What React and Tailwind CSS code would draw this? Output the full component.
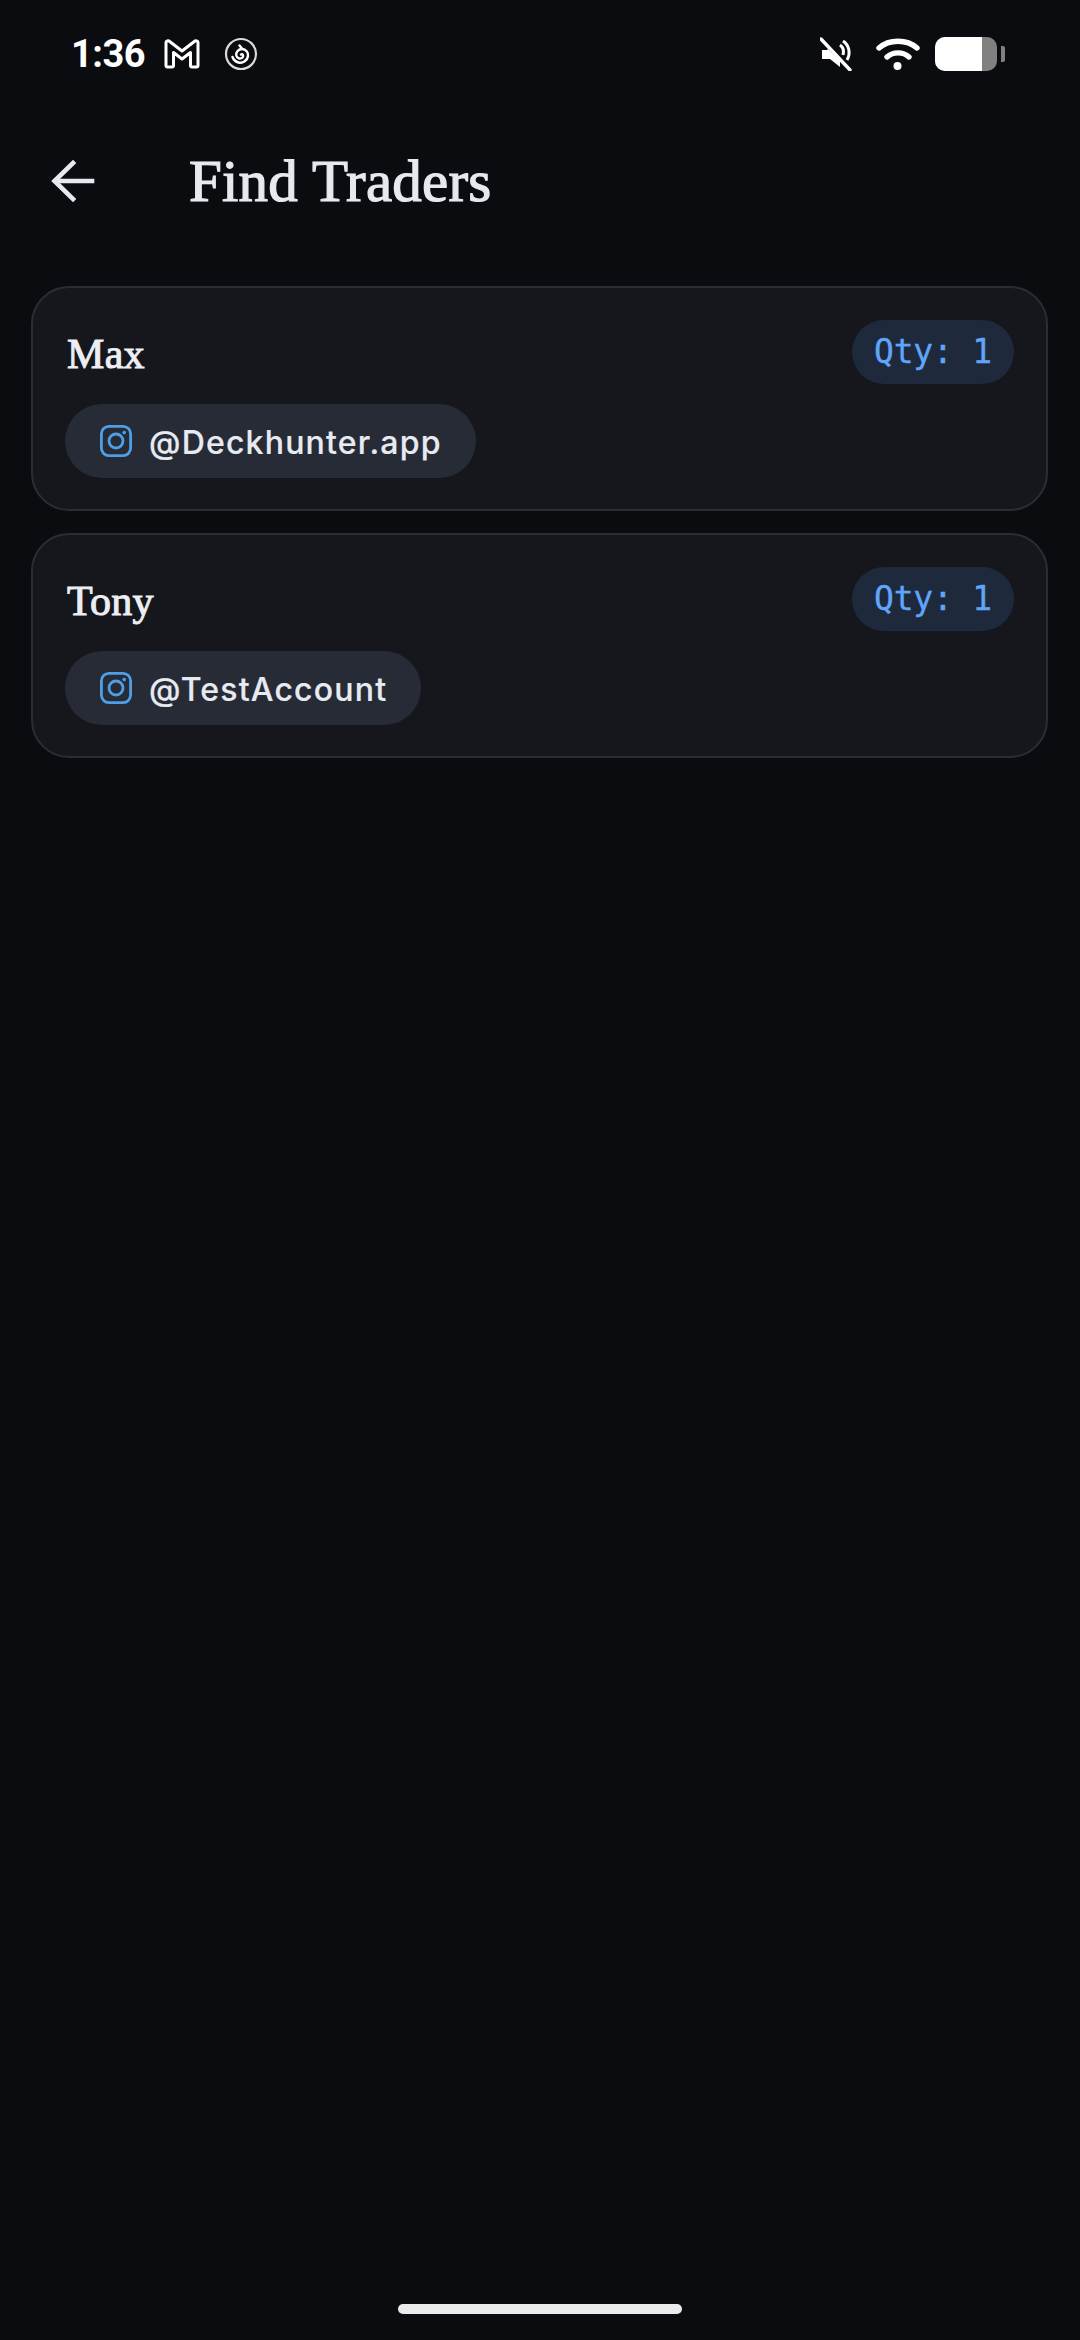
import React from "react";

const sans = "font-['Inter','Noto_Sans',sans-serif]";

function GmailIcon() {
  return (
    <svg width="36" height="30" viewBox="0 0 36 30" fill="none" stroke="#fff" strokeWidth="3" strokeLinejoin="round">
      <path d="M2 3.5 C2 2 3.5 1.5 5 2 L18 12 L31 2 C32.5 1.5 34 2 34 3.5 V26.5 C34 27.5 33.5 28 32.5 28 H28 C27 28 26.5 27.5 26.5 26.5 V13.5 L18 20 L9.5 13.5 V26.5 C9.5 27.5 9 28 8 28 H3.5 C2.5 28 2 27.5 2 26.5 Z" />
    </svg>
  );
}

function SpiralIcon() {
  return (
    <svg width="34" height="34" viewBox="0 0 34 34" fill="none" stroke="#fff" strokeLinecap="round">
      <circle cx="17" cy="17" r="15" strokeWidth="2.2" opacity="0.85" />
      <path d="M17 17.5 C18.5 16.5 20 18.5 18.5 20.5 C16.5 22.5 13 21.5 12.3 18.5 C11.6 15 14.5 12 18 12 C22 12 24.5 15.5 24 19 C23.4 23.5 19 26.5 14.5 25.5 C11.5 24.8 9.5 22.8 8.5 20" strokeWidth="2.4" />
      <path d="M15.5 8.5 L18 11.5" strokeWidth="2.4" />
    </svg>
  );
}

function MuteIcon() {
  return (
    <svg width="32" height="34" viewBox="0 0 32 34" fill="#fff">
      <path d="M2 13 H7 L8 12 L20 24 V30 L10 22 H2 Z" />
      <path d="M20 8 C23 10 24 14 23 18" stroke="#fff" strokeWidth="3" fill="none" />
      <path d="M23 4 C29 8 31 16 27 23" stroke="#fff" strokeWidth="3" fill="none" />
      <path d="M1 2 L30 33" stroke="#fff" strokeWidth="3.4" strokeLinecap="round" />
    </svg>
  );
}

function WifiIcon() {
  return (
    <svg width="44" height="34" viewBox="0 0 44 34" fill="none" stroke="#fff" strokeWidth="5.4" strokeLinecap="round">
      <path d="M3 11 C13 2 31 2 41 11" />
      <path d="M11 20 C17 14.5 27 14.5 33 20" />
      <circle cx="21.5" cy="29" r="4" fill="#fff" stroke="none" />
    </svg>
  );
}

function Battery() {
  return (
    <div className="flex items-center gap-[4px]">
      <div className="flex h-[34px] w-[62px] overflow-hidden rounded-[10px] bg-[#808080]">
        <div className="h-full w-[47px] bg-white" />
      </div>
      <div className="h-[16px] w-[4px] rounded-r-[2px] bg-[#808080]" />
    </div>
  );
}

function BackArrow() {
  return (
    <svg width="44" height="44" viewBox="0 0 44 44" fill="none" stroke="#e8e9ee" strokeWidth="4.6" strokeLinecap="square" strokeLinejoin="miter">
      <path d="M41 22 H5" />
      <path d="M22 4 L3.5 22 L22 40" />
    </svg>
  );
}

function InstagramIcon() {
  return (
    <svg width="32" height="32" viewBox="0 0 32 32" fill="none" stroke="#4f9fe6" strokeWidth="2.8">
      <rect x="1.4" y="1.4" width="29.2" height="29.2" rx="7.5" />
      <circle cx="16" cy="16" r="7" />
      <circle cx="24.2" cy="7.6" r="1.8" fill="#4f9fe6" stroke="none" />
    </svg>
  );
}

function TraderCard({ name, handle }) {
  return (
    <div className="flex h-[225px] flex-col rounded-[38px] border-2 border-[#2a2d36] bg-[#15171d] pl-[32px] pr-[32px] pt-[32px]">
      <div className="flex h-[64px] items-center justify-between">
        <span className="pl-[2px] pt-[3px] font-['Liberation_Serif',serif] text-[42px] font-normal leading-none tracking-[0.3px] text-[#eceef3] [-webkit-text-stroke:1px_#eceef3]">{name}</span>
        <span className="flex h-[64px] items-center rounded-full bg-[#1e2a3c] px-[22px] pb-[2px] font-['DejaVu_Sans_Mono',monospace] text-[33px] leading-none tracking-[-0.2px] text-[#60a5fa] [-webkit-text-stroke:0.3px_#60a5fa]">Qty: 1</span>
      </div>
      <div className="mt-[20px] flex">
        <div className="flex h-[74px] items-center gap-[17px] rounded-full bg-[#262b35] pl-[35px] pr-[34px]">
          <InstagramIcon />
          <span className={`${sans} pt-[4px] text-[32px] font-medium leading-none tracking-[1.2px] text-[#e8eaf2] [-webkit-text-stroke:0.2px_#e8eaf2]`}>{handle}</span>
        </div>
      </div>
    </div>
  );
}

export default function App() {
  return (
    <div className="flex h-[2340px] w-[1080px] flex-col overflow-hidden bg-[#0a0c10]">
      <div className="flex h-[108px] shrink-0 items-center justify-between pl-[71px] pr-[75px]">
        <div className="flex items-center">
          <span className="w-[93px] font-['Roboto',sans-serif] text-[38px] font-bold leading-none tracking-[-0.5px] text-white">1:36</span>
          <GmailIcon />
          <span className="ml-[24px]"><SpiralIcon /></span>
        </div>
        <div className="flex items-center">
          <MuteIcon />
          <span className="ml-[24px]"><WifiIcon /></span>
          <span className="ml-[15px]"><Battery /></span>
        </div>
      </div>
      <div className="flex h-[146px] shrink-0 items-center gap-[94px] pl-[51px]">
        <BackArrow />
        <h1 className="font-['Liberation_Serif',serif] text-[59px] font-normal leading-none tracking-[0.2px] text-[#e8e9ee] [-webkit-text-stroke:1.2px_#e8e9ee]">Find Traders</h1>
      </div>
      <div className="mt-[32px] flex flex-col gap-[22px] pl-[31px] pr-[32px]">
        <TraderCard name="Max" handle="@Deckhunter.app" />
        <TraderCard name="Tony" handle="@TestAccount" />
      </div>
      <div className="mt-auto flex justify-center pb-[26px]">
        <div className="h-[10px] w-[284px] rounded-full bg-[#ebebeb]" />
      </div>
    </div>
  );
}
